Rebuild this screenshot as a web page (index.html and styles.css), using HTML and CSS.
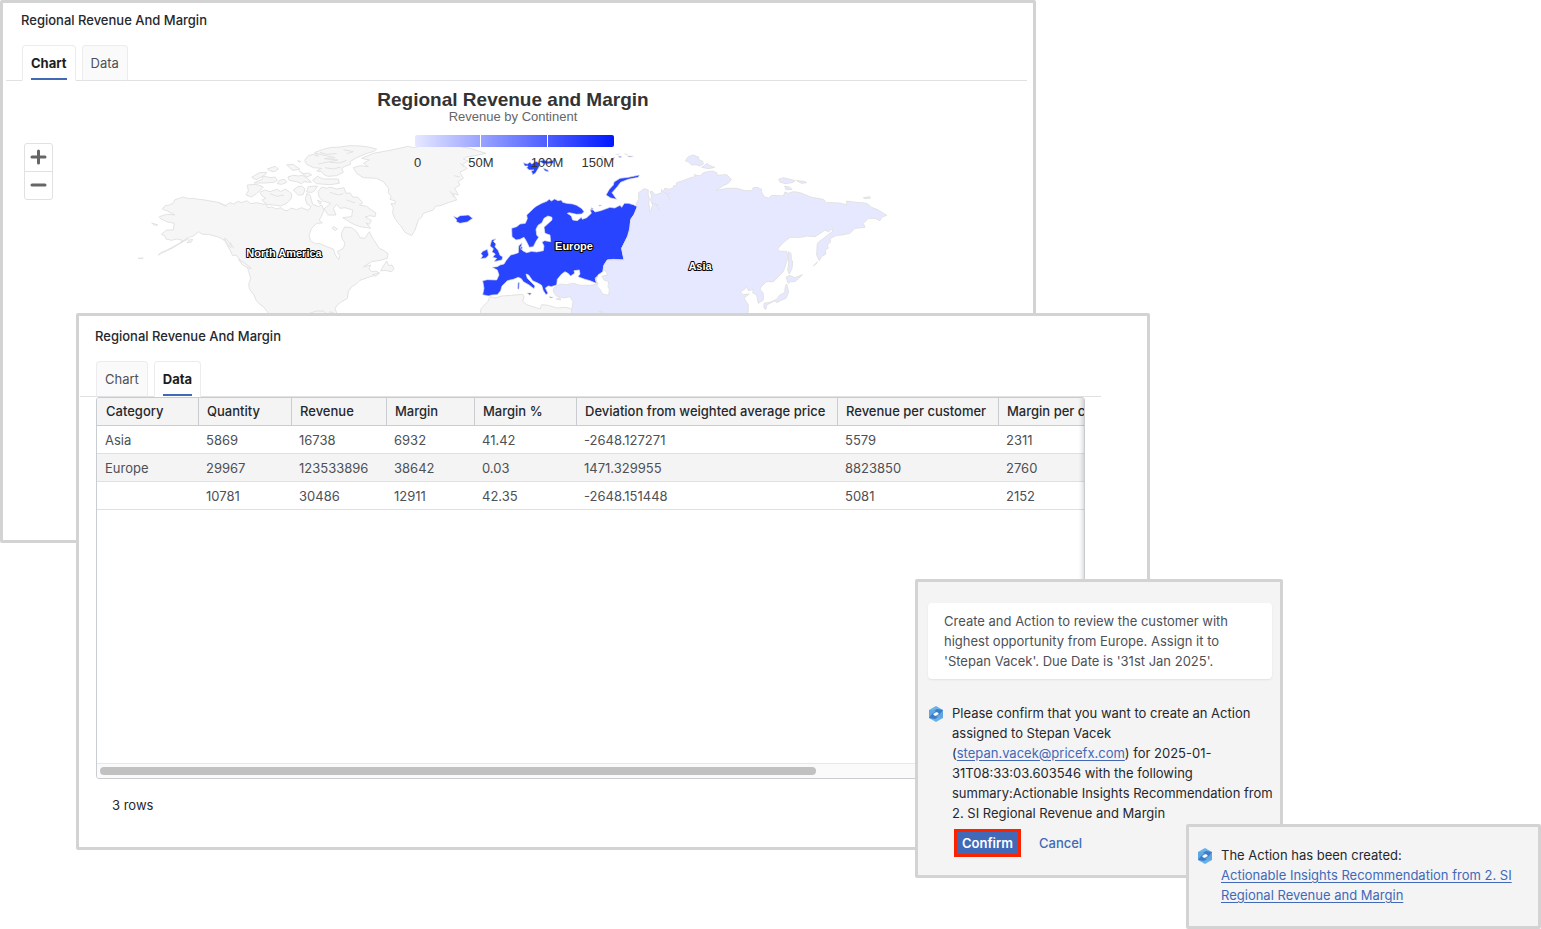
FILE: index.html
```html
<!DOCTYPE html>
<html lang="en">
<head>
<meta charset="utf-8">
<title>Regional Revenue And Margin</title>
<link rel="stylesheet" href="styles.css">
</head>
<body>
<svg class="defs" aria-hidden="true">
  <symbol id="logo" viewBox="0 0 14 16">
    <path fill="#67b2e8" d="M7 0 14 4v8l-7 4-7-4V4z"/>
    <path fill="#3f7cc6" d="M14 4v5L9 10 7 6 4 7 3 6l5-3z"/>
    <path fill="#3f7cc6" d="M0 12V7l5-1 2 4 3-1 1 1-5 3z"/>
    <path fill="#5fa6e2" d="M0 4l7 1-4 3-3 4zM14 12l-7-1 4-3 3-4z"/>
    <path fill="#fff" d="M4 8l4-2 2 2-4 2z"/>
  </symbol>
</svg>
<main class="desktop">
  <section class="window window-chart">
    <h2 class="window-title">Regional Revenue And Margin</h2>
    <div class="tabs" role="tablist">
      <button class="tab tab-active" role="tab" aria-selected="true"><span>Chart</span></button>
      <button class="tab" role="tab" aria-selected="false"><span>Data</span></button>
    </div>
    <div class="chart">
      <svg class="map" viewBox="3 81 1030 459" role="img" aria-label="Revenue by Continent">
        <defs>
          <linearGradient id="scale"><stop offset="0" stop-color="#e6e8ff"/><stop offset="1" stop-color="#0018ff"/></linearGradient>
        </defs>
        <g transform="translate(130 135) scale(.33333)">
          <g class="land">
            <path d="M97 222 104 213 118 210 130 204 135 194 148 190 160 186 175 191 190 190 205 193 225 195 240 198 265 202 275 208 285 212 300 203 310 207 325 199 335 203 345 199 352 198 362 206 380 203 398 207 410 208 412 218 425 216 440 222 452 218 465 227 475 226 482 219 500 224 515 218 535 226 543 215 530 206 526 192 531 175 540 180 548 208 565 215 575 210 582 225 576 240 568 255 577 264 560 265 545 280 537 300 542 318 556 326 570 326 590 335 610 342 616 360 626 374 630 362 622 350 640 340 645 325 636 310 634 295 644 276 665 278 680 290 690 308 705 310 718 290 728 310 735 320 748 340 764 348 774 356 772 370 750 376 725 380 705 392 700 396 722 390 717 402 726 410 738 408 748 414 735 421 712 428 690 436 678 448 665 455 655 470 652 490 632 502 622 510 615 520 624 545 424 545 412 530 400 515 388 507 378 495 372 480 358 462 356 448 362 430 356 410 352 395 340 386 330 375 318 360 308 362 300 345 285 318 270 308 262 305 235 298 218 298 205 290 192 302 182 306 175 312 150 325 130 338 100 352 85 360 92 353 110 346 148 325 158 316 140 312 125 316 108 312 104 302 94 298 110 285 130 285 133 265 110 260 90 250 88 245 110 238 135 240 112 228Z"/>
            <path d="M282 309 292 315 306 335 301 337 290 324ZM326 374 340 381 364 400 356 400 338 390ZM176 316 188 313 184 321 172 324ZM65 264 84 270 74 271ZM24 370 40 369 38 371Z"/>
            <path d="M352 150 375 148 385 150 400 156 392 165 380 175 365 186 348 180 355 168ZM390 172 404 165 420 170 442 163 452 170 465 162 478 170 485 177 484 190 470 205 452 213 430 210 410 208 395 195 408 190 396 183ZM490 165 504 155 515 153 525 162 520 178 506 181ZM535 155 562 153 556 165 546 172 530 171Z"/>
            <path d="M365 127 388 113 410 112 403 121 385 131 378 134ZM412 102 436 94 445 102 433 110 418 107ZM400 123 420 128 435 126 442 136 430 142 404 144 372 144 384 138 396 134ZM448 136 464 133 470 142 455 148 442 146ZM470 90 490 88 510 103 488 106 478 97ZM503 77 512 79 508 82ZM474 126 490 121 505 123 518 121 533 130 544 142 522 140 514 146 500 140 478 136ZM508 108 520 116 536 114 545 120 530 126Z"/>
            <path d="M524 76 535 62 550 58 565 64 555 52 580 43 600 38 630 36 660 32 690 33 715 36 740 42 732 49 710 55 680 68 660 80 662 88 645 94 635 100 640 112 620 122 594 124 580 118 575 110 560 108 575 100 550 98 530 88ZM552 54 615 68 582 71 624 75 565 87M548 136 562 124 580 132 625 132 628 145 600 149 560 146Z"/>
            <path d="M564 170 575 156 590 160 600 156 620 162 642 158 648 175 660 174 668 186 684 187 698 204 688 210 710 214 720 222 738 234 735 245 720 242 705 246 724 256 718 268 708 263 722 280 710 278 690 275 665 265 650 255 638 248 665 245 668 225 645 218 630 220 620 208 610 220 618 240 595 240 582 222 602 205 580 198 568 188ZM612 275 622 282 616 287 606 280ZM756 400 770 378 776 392 786 390 792 402 785 410 765 406 752 408ZM728 419 748 414 738 424ZM562 196 575 200 570 208Z"/>
            <path d="M670 98 690 92 715 95 700 85 718 75 695 70 730 55 780 46 835 34 850 38 900 28 960 30 1020 40 1068 55 1045 60 1010 66 1000 72 1014 78 998 88 1012 100 990 112 1000 130 984 140 990 150 974 160 985 180 968 175 980 195 955 203 930 212 916 214 910 225 880 235 875 246 865 255 855 285 845 302 825 292 812 272 805 265 795 250 788 235 790 218 783 205 795 207 796 198 780 193 784 183 775 175 776 160 760 140 740 130 700 128 680 115Z"/>
            <path d="M538 535 560 528 580 528 588 535M596 531 610 532 606 538"/>
            <path class="coast" d="M570 52 590 58 620 56M600 82 630 84 650 76M585 98 610 102 632 96M640 44 670 50 650 56M420 176 440 184 462 180M600 172 625 180 640 176M650 195 676 204M990 84 1002 96M972 122 990 126M960 168 972 186M300 322 312 340M268 203 290 214M150 325 175 306"/>
          </g>
          <g transform="translate(750 15)">
            <path class="land" d="M298 530 304 505 324 484 330 470 345 474 365 468 395 466 428 463 432 470 428 484 440 494 468 503 480 507 485 494 505 496 530 504 555 502 575 506 580 535Z"/>
            <g class="europe">
              <path d="M308 422 322 419 350 420 357 405 352 390 336 382 352 380 360 375 372 372 378 362 392 345 404 342 415 338 416 318 426 308 424 322 428 332 440 338 455 334 470 336 490 332 492 318 486 306 494 302 512 305 510 285 495 280 492 262 516 240 516 232 504 228 492 235 486 248 474 256 468 268 470 285 476 292 468 304 460 320 448 322 440 305 432 292 420 298 408 300 396 290 395 265 410 260 420 252 436 250 442 236 440 225 452 214 462 204 470 198 485 190 500 184 508 178 514 183 524 177 534 182 544 180 548 187 560 190 578 192 590 196 606 206 612 215 605 222 590 223 568 218 562 220 574 228 578 240 592 242 604 232 607 238 620 233 634 220 630 208 640 210 645 216 662 212 690 202 704 204 720 196 725 202 733 190 745 190 760 194 772 200 765 220 753 236 750 262 742 290 725 325 729 344 733 360 700 358 682 360 672 375 668 395 654 405 648 420 654 432 630 422 612 417 594 410 600 402 598 390 582 392 584 400 572 408 564 400 555 395 545 402 532 418 530 435 514 440 505 438 496 444 504 460 498 464 490 452 485 436 475 430 458 422 446 405 438 402 442 415 465 438 462 446 446 434 430 425 424 416 415 412 400 418 382 422 366 438 362 452 352 464 336 465 325 468 308 464 312 445Z"/>
              <path d="M335 300 348 296 340 304 348 312 345 320 355 332 360 346 368 350 366 360 342 365 350 355 338 352 346 342 336 336 340 326 330 318ZM308 334 322 328 326 345 318 354 302 356 308 347 303 341ZM230 240 220 229 232 233 240 227 265 225 278 235 262 246 240 250 229 245ZM421 320 428 322 424 330ZM414 428 418 427 417 448 413 446ZM442 459 454 459 450 466ZM508 470 520 472 512 474Z"/>
              <path d="M430 68 442 72 450 66 455 72 468 64 478 68 478 80 466 100 458 104 454 92 462 90 448 90 440 84 444 78 434 78ZM476 64 490 60 505 64 522 60 520 70 500 72 488 70ZM490 84 504 90 506 96 494 92ZM678 165 688 148 700 135 702 126 720 115 745 112 778 105 775 112 745 118 722 127 712 140 696 158 710 178 692 174ZM634 203 640 206 634 210ZM656 196 664 195 660 199Z"/>
              <path d="M664 50 672 52ZM695 58 704 52 700 60ZM707 44 718 42ZM714 48 726 50 720 53ZM734 42 744 44ZM742 48 760 49 750 51Z"/>
            </g>
          </g>
          <g class="asia" transform="translate(1470 15)">
            <path d="M-200 445-180 432-160 434-140 430-120 436-90 436-66 432-72 422-70 410-74 415-68 440-60 448-52 462-34 466-32 448-36 440-34 425-48 420-54 408-38 406-40 395-50 390-48 376-38 360 12 360 5 325 28 280 32 240 42 224 52 200 48 192 56 178 56 158 64 152 72 146 85 150 84 162 88 176 86 192 90 205 88 216 94 210 98 194 92 180 95 168 90 155 97 154 105 165 125 158 124 148 130 156 134 145 148 148 160 144 160 138 170 136 170 128 188 122 215 112 228 110 222 104 240 108 250 98 275 93 290 98 292 106 320 104 334 118 325 130 308 138 288 152 320 145 350 145 375 152 395 152 400 143 412 142 425 148 424 155 432 170 446 174 455 166 490 168 495 156 505 160 520 155 540 158 575 172 610 178 620 188 640 188 665 190 680 195 680 183 700 186 740 190 755 202 775 210 800 226 785 232 780 242 765 235 745 235 730 250 735 262 705 265 690 280 665 285 650 286 638 292 630 296 632 306 622 315 625 325 615 330 618 342 604 350 598 362 590 345 592 310 600 303 638 274 638 265 625 276 615 270 604 278 585 290 560 288 542 292 510 292 490 308 472 328 480 334 500 334 504 350 500 365 490 395 475 410 460 425 440 425 425 438 420 448 430 460 430 480 415 490 410 465 398 458 400 448 385 452 380 440 374 448 360 455 370 464 388 462 372 474 385 495 384 520 389 545-150 545-146 520-141 485-150 470-170 474-192 467-200 455Z"/>
            <path d="M505 335 513 340 514 358 518 366 516 385 508 402 503 390 506 370ZM498 412 508 406 525 413 548 404 525 425 512 425 505 430ZM500 432 506 455 498 475 485 480 470 488 465 482 440 495 438 508 432 505 432 490 450 487 470 478 480 465 494 458 496 440ZM580 378 592 365 590 370Z"/>
            <path d="M196 62 205 50 220 45 237 52 235 58 248 64 250 72 240 78 228 74 215 75 205 66ZM245 82 262 70 268 76 284 82 265 86ZM476 118 490 113 510 118 526 122 516 128 495 131 480 126ZM530 122 552 124 560 128 545 130ZM494 138 510 142 516 148 498 149ZM730 173 750 170 750 175 735 176ZM-192 477-180 473-178 480ZM-64 515-58 513-50 517Z"/>
            <path class="coast" d="M94 190 104 192 112 198 118 210M104 192 116 195M130 156 142 162 150 180M142 162 150 158"/>
          </g>
        </g>
        <rect x="415" y="135" width="199" height="12" rx="2" fill="url(#scale)"/>
        <path class="tick" d="M480.500 135v12M547.500 135v12"/>
        <g class="scale-labels">
          <text x="414" y="167">0</text>
          <text x="481" y="167" text-anchor="middle">50M</text>
          <text x="547" y="167" text-anchor="middle">100M</text>
          <text x="614" y="167" text-anchor="end">150M</text>
        </g>
        <text class="chart-title" x="513" y="106">Regional Revenue and Margin</text>
        <text class="chart-subtitle" x="513" y="121">Revenue by Continent</text>
        <g class="continents">
          <text x="284" y="257">North America</text>
          <text x="574" y="250">Europe</text>
          <text x="700" y="270">Asia</text>
        </g>
      </svg>
      <div class="zoom">
        <button aria-label="Zoom in"><svg viewBox="0 0 17 17"><path d="M2 8h13M8.500 2v12"/></svg></button>
        <button aria-label="Zoom out"><svg viewBox="0 0 17 17"><path d="M2 8h13"/></svg></button>
      </div>
    </div>
  </section>

  <section class="window window-data">
    <h2 class="window-title">Regional Revenue And Margin</h2>
    <div class="tabs" role="tablist">
      <button class="tab" role="tab" aria-selected="false"><span>Chart</span></button>
      <button class="tab tab-active" role="tab" aria-selected="true"><span>Data</span></button>
    </div>
    <div class="grid">
      <div class="grid-body">
        <table>
          <colgroup><col class="c-category"><col class="c-quantity"><col class="c-revenue"><col class="c-margin"><col class="c-percent"><col class="c-deviation"><col class="c-customer"><col class="c-last"></colgroup>
          <thead>
            <tr><th>Category</th><th>Quantity</th><th>Revenue</th><th>Margin</th><th>Margin %</th><th>Deviation from weighted average price</th><th>Revenue per customer</th><th>Margin per customer</th></tr>
          </thead>
          <tbody>
            <tr><td>Asia</td><td>5869</td><td>16738</td><td>6932</td><td>41.42</td><td>-2648.127271</td><td>5579</td><td>2311</td></tr>
            <tr><td>Europe</td><td>29967</td><td>123533896</td><td>38642</td><td>0.03</td><td>1471.329955</td><td>8823850</td><td>2760</td></tr>
            <tr><td></td><td>10781</td><td>30486</td><td>12911</td><td>42.35</td><td>-2648.151448</td><td>5081</td><td>2152</td></tr>
          </tbody>
        </table>
      </div>
      <div class="scrollbar"><div class="thumb"></div></div>
    </div>
    <p class="row-count">3 rows</p>
  </section>

  <section class="window window-confirm">
    <p class="bubble">Create and Action to review the customer with highest opportunity from Europe. Assign it to 'Stepan Vacek'. Due Date is '31st Jan 2025'.</p>
    <div class="reply">
      <svg class="logo"><use href="#logo"/></svg>
      <div class="reply-body">
        <p>Please confirm that you want to create an Action assigned to Stepan Vacek<br>(<a href="#">stepan.vacek@pricefx.com</a>) for 2025-01-<br>31T08:33:03.603546 with the following summary:Actionable Insights Recommendation from 2. SI Regional Revenue and Margin</p>
        <div class="actions">
          <button class="confirm">Confirm</button>
          <button class="cancel">Cancel</button>
        </div>
      </div>
    </div>
  </section>

  <section class="window window-created">
    <div class="reply">
      <svg class="logo"><use href="#logo"/></svg>
      <div class="reply-body">
        <p>The Action has been created:<br><a href="#">Actionable Insights Recommendation from 2. SI Regional Revenue and Margin</a></p>
      </div>
    </div>
  </section>
</main>
</body>
</html>
```
FILE: styles.css
```css
* { box-sizing: border-box; }
body { margin: 0; background: #fff; color: #25282d; font: 13px/20px Inter, "Liberation Sans", sans-serif; }
p, h2 { margin: 0; }
button { margin: 0; padding: 0; border: 0; background: none; font: inherit; color: inherit; }
a { color: #4169b8; text-decoration: underline; text-underline-offset: 2px; }
.defs { display: none; }

.desktop { position: relative; min-height: 929px; overflow: hidden; }
.window { position: absolute; border: 3px solid #d3d3d3; border-radius: 2px; background: #fff; }
.window-chart { top: 0; left: 0; right: 505px; padding-top: 7px; }
.window-data { top: 313px; left: 76px; right: 391px; padding: 10px 0 32px; }
.window-confirm { top: 579px; right: 258px; width: 368px; padding: 21px 0 18px 10px; background: #f4f4f4; }
.window-created { top: 824px; right: 0; width: 355px; padding: 18px 8px 21px 9px; background: #f4f4f4; }

.window-title { padding-left: 18px; font-size: 13px; line-height: 20px; font-weight: 500; }
.window-data .window-title { padding-left: 16px; }
.tabs { display: flex; gap: 6px; margin: 15px 6px 0 3px; padding-left: 16px; border-bottom: 1px solid #e1e1e3; }
.window-data .tabs { margin: 15px 46px 0 1px; }
.tab { height: 36px; margin-bottom: -1px; padding: 0 8px; border: 1px solid #ececee; border-bottom-color: #e1e1e3; border-radius: 4px 4px 0 0; background: #fafafa; color: #4d5056; }
.tab span { display: block; height: 34px; line-height: 35px; }
.tab-active { border-bottom-color: #fff; background: #fff; color: #1b1d21; font-weight: 700; }
.tab-active span { border-bottom: 2px solid #4169b8; }

.chart { position: relative; }
.map { display: block; width: 100%; height: auto; }
.map text { font-family: "Liberation Sans", Arial, sans-serif; }
.land, .asia, .europe { stroke: #e2e2e2; stroke-width: 3; stroke-linejoin: round; }
.land { fill: #f6f6f6; }
.asia { fill: #e6e8ff; }
.europe { fill: #2944ff; stroke-width: 2; }
.coast { fill: none; }
.tick { stroke: #fff; }
.scale-labels { font-size: 13px; fill: #333; }
.chart-title { font-size: 19px; font-weight: 700; fill: #333; text-anchor: middle; }
.chart-subtitle { font-size: 13px; fill: #666; text-anchor: middle; }
.continents { font-size: 11px; font-weight: 700; fill: #fff; stroke: #000; stroke-width: 2px; paint-order: stroke; stroke-linejoin: round; text-anchor: middle; }
.zoom { position: absolute; top: 62px; left: 21px; display: flex; flex-direction: column; width: 29px; border: 1px solid #e1e1e3; border-radius: 3px; background: #fff; }
.zoom button { display: grid; place-items: center; height: 27px; }
.zoom button + button { height: 28px; border-top: 1px solid #e1e1e3; }
.zoom svg { width: 17px; height: 17px; fill: none; stroke: #666; stroke-width: 3; stroke-linecap: round; }

.grid { margin: 0 62px 0 17px; border: 1px solid #c9ccd1; border-radius: 3px; overflow: hidden; }
.grid-body { position: relative; min-height: 365px; overflow: hidden; }
.grid-body::after { content: ""; position: absolute; inset: 0; box-shadow: inset -5px 0 5px -4px rgba(0, 0, 0, .2); }
table { width: 1100px; border-collapse: separate; border-spacing: 0; table-layout: fixed; color: #4d5056; }
th, td { height: 28px; padding: 0 8px; border-bottom: 1px solid #dfe0e2; line-height: 27px; text-align: left; white-space: nowrap; }
td { padding-top: 2px; line-height: 25px; }
th { padding: 0 0 0 9px; border-bottom-color: #c9ccd1; border-right: 1px solid #c9ccd1; background: #f4f4f4; color: #25282d; font-weight: 500; }
th + th { padding-left: 8px; }
td + td { padding-left: 7px; }
tbody tr:nth-child(2) td { background: #f4f4f4; }
.c-category, .c-percent { width: 102px; }
.c-quantity { width: 93px; }
.c-revenue { width: 95px; }
.c-margin { width: 88px; }
.c-deviation { width: 261px; }
.c-customer { width: 161px; }
.scrollbar { height: 15px; padding: 3px; border-top: 1px solid #e8e8e8; background: #fafafa; }
.thumb { width: 73%; height: 8px; border-radius: 4px; background: #c1c1c1; }
.row-count { margin: 16px 0 0 33px; }

.bubble { margin-right: 8px; padding: 8px 16px; border-radius: 4px; background: #fff; color: #4d5056; box-shadow: 0 1px 2px rgba(0, 0, 0, .08); }
.reply { display: flex; gap: 9px; }
.bubble + .reply { margin-top: 24px; padding-left: 1px; }
.logo { flex: none; width: 14px; height: 16px; margin-top: 3px; }
.reply-body { flex: 1; min-width: 0; }
.actions { display: flex; gap: 18px; margin: 6px 0 0 2px; }
.confirm { height: 28px; padding: 0 5px; border: 3px solid #fb2200; background: #4169b8; color: #fff; font-weight: 600; }
.cancel { color: #4169b8; font-weight: 500; }
```
